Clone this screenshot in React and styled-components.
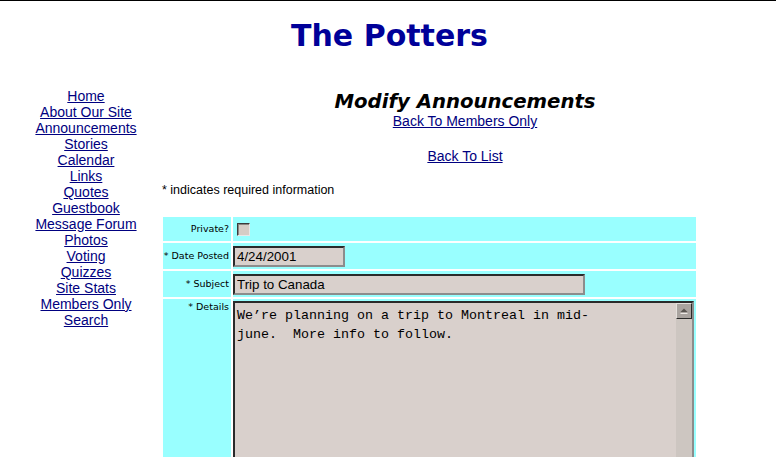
import React from "react";
import styled, { createGlobalStyle } from "styled-components";

const GlobalStyle = createGlobalStyle`
  body {
    margin: 0;
    background: #fff;
    font-family: "Liberation Sans", Arial, sans-serif;
    color: #000;
  }
`;

const Page = styled.div`
  border-top: 1px solid #000;
  padding: 0 8px;
`;

const SiteTitle = styled.h1`
  margin: 17px 0 0;
  font: bold 30px/36px "DejaVu Sans", Verdana, sans-serif;
  color: #000099;
  text-align: center;
  padding-left: 3px;
`;

const Columns = styled.div`
  display: flex;
  margin-top: 34px;
`;

const Nav = styled.nav`
  width: 156px;
  flex: none;
  display: flex;
  flex-direction: column;
  align-items: center;
  font-size: 14px;
  line-height: 16px;
`;

const Link = styled.a`
  color: #000080;
  text-decoration: underline;
  cursor: pointer;
`;

const Main = styled.main`
  flex: 1;
  display: flex;
  flex-direction: column;
  margin-left: -2px;
`;

const PageHeading = styled.h2`
  margin: 2px 0 0;
  font: italic bold 19.7px/23px "DejaVu Sans", Verdana, sans-serif;
  text-align: center;
`;

const BackLine = styled.div`
  margin-top: ${p => p.$gap || 0}px;
  text-align: center;
  font-size: 14px;
  line-height: 16px;
`;

const Note = styled.p`
  margin: 19px 0 0;
  font-size: 12.5px;
  line-height: 14px;
`;

const FormGrid = styled.div`
  margin: 20px 0 0 1px;
  display: grid;
  grid-template-columns: 68px 463px;
  grid-template-rows: 24px 26px 26px 180px;
  gap: 2px;
`;

const Label = styled.div`
  background: #99ffff;
  display: flex;
  justify-content: flex-end;
  align-items: ${p => (p.$top ? "flex-start" : "center")};
  padding: ${p => (p.$top ? "2px" : "0")} 2px 0 0;
  font: 9.5px/12px "DejaVu Sans", Verdana, sans-serif;
  white-space: nowrap;
`;

const Field = styled.div`
  background: #99ffff;
  display: flex;
  align-items: ${p => (p.$top ? "flex-start" : "center")};
  padding-top: ${p => (p.$top ? "2px" : "0")};
`;

const CheckBox = styled.input`
  appearance: none;
  width: 13px;
  height: 13px;
  margin: 1px 0 0 4px;
  box-sizing: border-box;
  background: #d6cdc6;
  border: 1px solid;
  border-color: #3a3a3a #e8e8e8 #e8e8e8 #3a3a3a;
  box-shadow: inset 1px 1px #8a8580;
`;

const TextInput = styled.input`
  width: ${p => p.$width}px;
  height: 21px;
  box-sizing: border-box;
  margin: 0;
  padding: 0 2px;
  border: 2px solid;
  border-color: #2a2a2a #8c8c8c #8c8c8c #2a2a2a;
  background: #d9d0cc;
  font: 13.33px "Liberation Sans", Arial, sans-serif;
  color: #000;
  outline: none;
`;

const TextBox = styled.div`
  width: 461px;
  height: 176px;
  box-sizing: border-box;
  display: flex;
  border: 2px solid;
  border-color: #2a2a2a #8c8c8c #8c8c8c #2a2a2a;
  background: #d9d0cc;
`;

const TextArea = styled.textarea`
  flex: 1;
  margin: 0;
  border: 0;
  padding: 3px 2px;
  background: transparent;
  font: 13.33px/19px "Liberation Mono", "Courier New", monospace;
  color: #000;
  resize: none;
  outline: none;
  overflow: hidden;
`;

const ScrollTrack = styled.div`
  width: 16px;
  flex: none;
  background: #cdc6c1;
  display: flex;
  flex-direction: column;
`;

const ScrollButton = styled.div`
  height: 16px;
  box-sizing: border-box;
  background: #a9a39f;
  border: 1px solid;
  border-color: #e4e0dc #2a2a2a #2a2a2a #e4e0dc;
  display: flex;
  align-items: center;
  justify-content: center;
`;

const navItems = [
  "Home",
  "About Our Site",
  "Announcements",
  "Stories",
  "Calendar",
  "Links",
  "Quotes",
  "Guestbook",
  "Message Forum",
  "Photos",
  "Voting",
  "Quizzes",
  "Site Stats",
  "Members Only",
  "Search",
];

const App = () => {
  return (
    <Page>
      <GlobalStyle />
      <SiteTitle>The Potters</SiteTitle>
      <Columns>
        <Nav>
          {navItems.map(item => (
            <Link key={item}>{item}</Link>
          ))}
        </Nav>
        <Main>
          <PageHeading>Modify Announcements</PageHeading>
          <BackLine>
            <Link>Back To Members Only</Link>
          </BackLine>
          <BackLine $gap={19}>
            <Link>Back To List</Link>
          </BackLine>
          <Note>* indicates required information</Note>
          <FormGrid>
            <Label>Private?</Label>
            <Field>
              <CheckBox type="checkbox" />
            </Field>
            <Label>* Date Posted</Label>
            <Field>
              <TextInput $width={112} defaultValue="4/24/2001" />
            </Field>
            <Label>* Subject</Label>
            <Field>
              <TextInput $width={352} defaultValue="Trip to Canada" />
            </Field>
            <Label $top>* Details</Label>
            <Field $top>
              <TextBox>
                <TextArea
                  defaultValue={
                    "We’re planning on a trip to Montreal in mid-\njune.  More info to follow."
                  }
                />
                <ScrollTrack>
                  <ScrollButton>
                    <svg width="8" height="6" viewBox="0 0 8 6">
                      <path d="M4 0.5 L7.5 4 H0.5 Z" fill="#5a5652" />
                      <path d="M0.5 5.5 H7.5" stroke="#ece8e4" strokeWidth="1" />
                    </svg>
                  </ScrollButton>
                </ScrollTrack>
              </TextBox>
            </Field>
          </FormGrid>
        </Main>
      </Columns>
    </Page>
  );
};

export default App;
